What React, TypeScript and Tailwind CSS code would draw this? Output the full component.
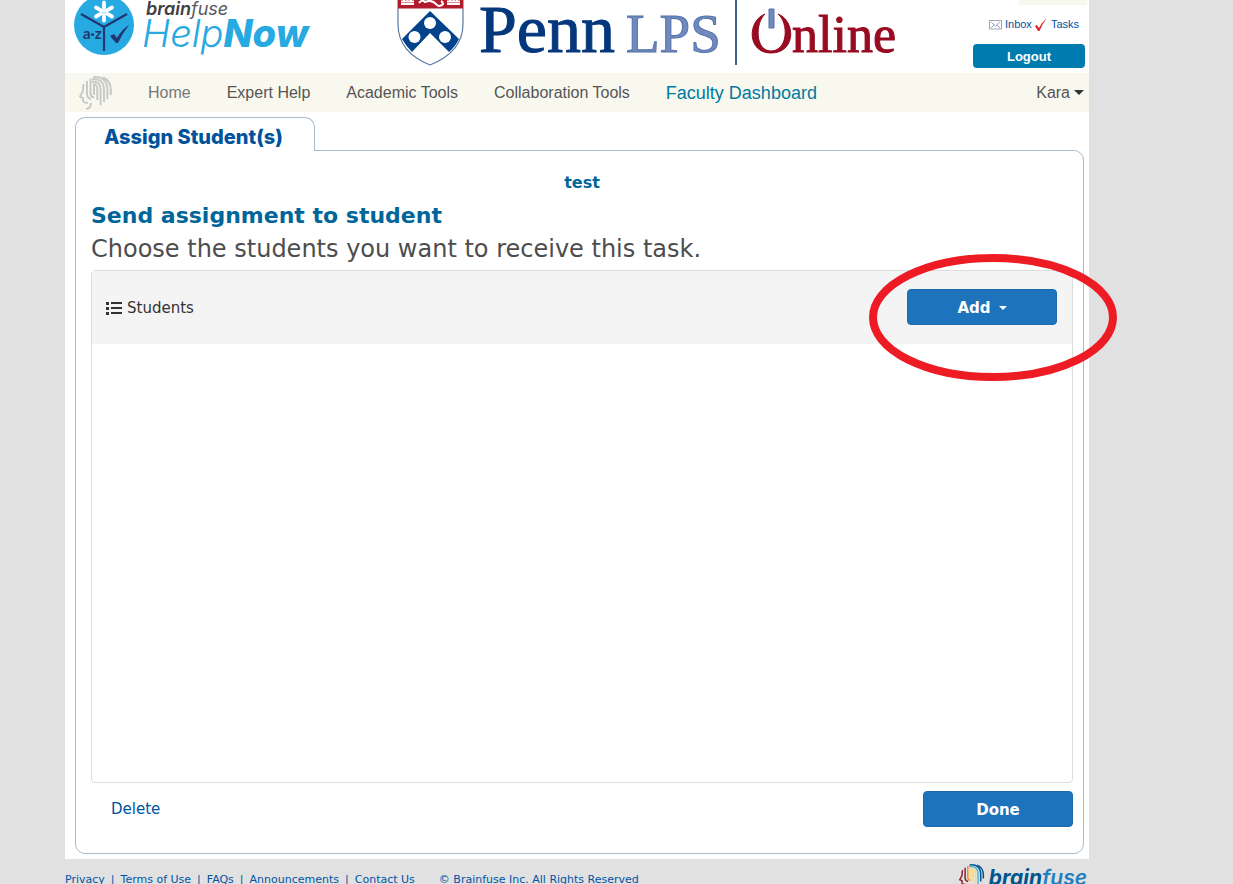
import { useState } from "react";

const VERDANA = "font-['DejaVu_Sans',sans-serif]";

const NAV_ITEMS = ["Expert Help", "Academic Tools", "Collaboration Tools"];

const FOOTER_LINKS = ["Privacy", "Terms of Use", "FAQs", "Announcements", "Contact Us"];

// Fingerprint head, gray in the nav and coloured in the footer
function BrainIcon({ colors, className }: { colors: string[]; className?: string }) {
    return (
        <svg viewBox="0 0 34 34" className={className} fill="none" strokeWidth="2" aria-hidden="true">
            <path d="M5 8C3 11 5 14 3.500 16L1 20.500L4 22V25Q5 27.500 9 26.500M7 33Q12 32 12 27" stroke={colors[0]} />
            <path d="M8 5V18Q8 22 12 23" stroke={colors[0]} />
            <path d="M11.500 2.500V18Q12 21 15 21.500" stroke={colors[1]} />
            <path d="M15 8.500V19M14 8.300Q18.300 8 18.300 13V24" stroke={colors[2]} />
            <path d="M13 5.800Q21.500 5 21.600 13V29" stroke={colors[2]} />
            <path d="M13 3.300Q25 2 25 13.500V26" stroke={colors[3]} />
            <path d="M14 1.200Q28.300 0 28.400 13.500V23" stroke={colors[4]} />
            <path d="M24 1.500Q31.700 5 31.800 13.500V19" stroke={colors[4]} />
        </svg>
    );
}

function HelpNowLogo() {
    return (
        <svg width="244" height="60" viewBox="0 0 244 60" role="img" aria-label="brainfuse HelpNow" className="shrink-0">
            <circle cx="30" cy="25" r="30" fill="#27a9e1" />
            <path d="M7 14L30 27L53 14M30 27V51" stroke="#21356f" strokeWidth="2.200" fill="none" />
            <g stroke="#fff" strokeWidth="3.800" strokeLinecap="round">
                <path d="M30 2.500V8M30 16V20.500M22 7.500L27 10.300M33 13.700L38 16.500M38 7.500L33 10.300M27 13.700L22 16.500" />
                <path d="M30 8V16M27 10.300L33 13.700M33 10.300L27 13.700" strokeWidth="1.500" />
            </g>
            <text x="9" y="39" fontSize="15" fontWeight="700" fill="#21356f" fontFamily="Lato, sans-serif">a·z</text>
            <path d="M36 36L40 34L43 38Q48 29 55 25Q48 34 44 43H42Z" fill="#21356f" />
            <text x="72" y="15" fontSize="18" fill="#58595b" fontStyle="italic" fontFamily="Inter, sans-serif">
                <tspan fontWeight="600" fill="#414042">brain</tspan>
                <tspan>fuse</tspan>
            </text>
            <text x="68" y="47" fontSize="38" fill="#27a9e1" fontStyle="italic" fontFamily="Inter, sans-serif">
                <tspan fontWeight="300">Help</tspan>
                <tspan fontWeight="800">Now</tspan>
            </text>
        </svg>
    );
}

function PennLogo() {
    return (
        <svg width="500" height="68" viewBox="0 0 500 68" role="img" aria-label="Penn LPS Online" className="shrink-0" fontFamily="'Liberation Serif', serif">
            <path d="M1 0V24C1 44 13 57 33 65C53 57 66 44 66 24V0Z" fill="#fff" stroke="#5b7ba5" strokeWidth="1.200" />
            <path d="M1 0H66V8.500H1Z" fill="#b01c2e" />
            <path d="M4 4H17M4 1.500H17M50 4H63M50 1.500H63M22 3Q25 -1 28 2Q34 -1 39 4Q42 8 46 4Q46 2 44 1" stroke="#fff" strokeWidth="2" fill="none" />
            <path d="M7 0V2M10.500 0V2M14 0V2M53 0V2M56.500 0V2M60 0V2" stroke="#fff" strokeWidth="2" />
            <path d="M33 11L62 39Q58 47 52 52L33 33L15 52Q9 46 5 39Z" fill="#02438b" />
            <circle cx="33" cy="23" r="6" fill="#fff" />
            <circle cx="17.500" cy="37" r="6" fill="#fff" />
            <circle cx="48" cy="37" r="6" fill="#fff" />
            <text x="82" y="52" fontSize="68" fill="#04377c" stroke="#04377c">Penn</text>
            <text x="229" y="52" fontSize="55" fill="#6f8abf" stroke="#5472a8">LPS</text>
            <path d="M339 0V65" stroke="#3f5f98" strokeWidth="2" />
            <path d="M368 14C350 21 350 53 374 53C399 53 399 21 381 14C392 23 391 51 374 51C358 51 358 23 368 14Z" fill="#980b20" stroke="#980b20" />
            <path d="M372 9H377V28H372Z" fill="#6f8abf" stroke="#5472a8" />
            <text x="395" y="52" fontSize="52" fill="#980b20" stroke="#980b20">nline</text>
        </svg>
    );
}

function Header() {
    return (
        <header className="flex h-[73px] items-start justify-between pr-0.5 pl-[9px]">
            <div className="flex gap-[79px]">
                <HelpNowLogo />
                <PennLogo />
            </div>
            <div className="flex flex-col items-end font-['Liberation_Sans',sans-serif]">
                <div className="h-[5px] w-[68px] bg-[#f9f8ef]" />
                <div className="flex h-[39px] items-center gap-[3px] pr-2 text-[11px] text-[#0054a4]">
                    <a href="#inbox" className="flex items-center gap-[3px]">
                        <svg width="13" height="10" viewBox="0 0 13 10" fill="none" stroke="#9aa3bd" aria-hidden="true">
                            <path d="M.5 .5H12.500V9H.500ZM2 2L6.500 6L11 2M2 8L5 5M11 8L8 5" />
                        </svg>
                        Inbox
                    </a>
                    <a href="#tasks" className="flex items-center gap-[3px]">
                        <svg width="13" height="13" viewBox="0 0 13 13" aria-hidden="true">
                            <path d="M0 8L2 7L4 10Q7 4 12 0Q7 6 4.500 13H3Z" fill="#e4202a" />
                        </svg>
                        Tasks
                    </a>
                </div>
                <button className="mr-0.5 h-6 w-28 rounded bg-[#007bb0] pt-0.5 text-[13px] font-bold text-white">Logout</button>
            </div>
        </header>
    );
}

function Nav() {
    return (
        <nav className="flex h-[39px] items-center bg-[#f9f8ef] pr-[5px] pl-[14px] font-['Liberation_Sans',sans-serif] text-base text-[#555]">
            <BrainIcon colors={["#c9c9c5", "#c9c9c5", "#c9c9c5", "#c9c9c5", "#c9c9c5"]} className="mr-[35px] size-[34px]" />
            <div className="flex items-center gap-9">
                <a href="#home" className="text-[#777]">Home</a>
                {NAV_ITEMS.map((item) => (
                    <a key={item} href="#menu">{item}</a>
                ))}
                <a href="#dashboard" className="text-lg text-[#007a9f]">Faculty Dashboard</a>
            </div>
            <button className="ml-auto flex items-center gap-1">
                Kara
                <span className="border-x-5 border-t-5 border-x-transparent border-t-[#333]" />
            </button>
        </nav>
    );
}

export default function App() {
    const [open, setOpen] = useState(false);

    return (
        <div className={`min-h-screen bg-[#e1e1e1] pr-36 pl-[65px] ${VERDANA}`}>
            <div className="max-w-[1024px] bg-white pb-[5px]">
                <Header />
                <Nav />

                <main className="pt-[5px] pr-[5px] pl-[10px]">
                    {/* Tab */}
                    <h1 className="relative z-10 flex h-[34px] w-60 rounded-t-[10px] border border-b-0 border-[#a5bccf] bg-white pt-[3px] pl-7 font-[Inter,sans-serif] text-xl leading-8 font-extrabold text-[#00539b]">
                        Assign Student(s)
                    </h1>

                    <section className="-mt-px rounded-[10px] rounded-tl-none border border-[#a5bccf] pt-5 pr-[10px] pb-[26px] pl-[15px]">
                        <h2 className="text-center text-base leading-6 font-bold text-[#069]">test</h2>
                        <h3 className="pt-[5px] text-[22px] leading-8 font-bold text-[#069]">Send assignment to student</h3>
                        <p className="pt-px text-2xl leading-8 text-[#4d4d4d]">Choose the students you want to receive this task.</p>

                        {/* Student list */}
                        <div className="mt-[5px] rounded border border-[#ddd]">
                            <div className="flex h-[73px] items-start justify-between bg-[#f4f4f4] pt-[18px] pr-[15px] pl-[14px]">
                                <h4 className="flex h-9 items-center gap-[5px] pt-0.5 text-[15px] text-[#333]">
                                    <svg width="16" height="13" viewBox="0 0 16 13" fill="#333" aria-hidden="true">
                                        <path d="M0 0H3V3H0ZM5 0H16V2H5ZM0 5H3V8H0ZM5 5H16V7H5ZM0 10H3V13H0ZM5 10H16V12H5Z" />
                                    </svg>
                                    Students
                                </h4>
                                <div className="relative">
                                    <button
                                        onClick={() => setOpen(!open)}
                                        aria-expanded={open}
                                        className="flex h-9 w-[150px] items-center justify-center gap-2 rounded border border-[#1b6aab] bg-[#1e74bc] pt-0.5 text-[15px] font-bold text-white"
                                    >
                                        Add
                                        <span className="border-x-4 border-t-4 border-x-transparent border-t-white" />
                                    </button>
                                    <svg
                                        width="248"
                                        height="127"
                                        viewBox="0 0 248 127"
                                        className="pointer-events-none absolute -top-[35px] -left-[38px] z-20 max-w-none"
                                        aria-hidden="true"
                                    >
                                        <ellipse cx="124" cy="63.500" rx="120" ry="59.500" fill="none" stroke="#ed1c24" strokeWidth="8" />
                                    </svg>
                                </div>
                            </div>
                            <div className="min-h-[438px]" />
                        </div>

                        <div className="mt-2 flex items-center justify-between pl-5">
                            <a href="#delete" className="text-[15px] text-[#0054a4]">Delete</a>
                            <button className="h-9 w-[150px] rounded border border-[#1b6aab] bg-[#1e74bc] pt-0.5 text-[15px] font-bold text-white">
                                Done
                            </button>
                        </div>
                    </section>
                </main>
            </div>

            <footer className="flex h-[25px] max-w-[1024px] items-start justify-between pr-0.5 text-[11px] leading-4 text-[#0054a4]">
                <div className="flex gap-6 pt-[13px]">
                    <div className="flex gap-1.5">
                        {FOOTER_LINKS.map((link, i) => (
                            <span key={link} className="flex gap-1.5">
                                {i > 0 && <span>|</span>}
                                <a href="#footer">{link}</a>
                            </span>
                        ))}
                    </div>
                    <span>© Brainfuse Inc. All Rights Reserved</span>
                </div>
                <div className="flex gap-1 pt-[5px]">
                    <BrainIcon colors={["#8e2a2f", "#f0913a", "#f5dc8a", "#58b5dd", "#00558f"]} className="size-[26px] shrink-0" />
                    <span className="pt-0.5 font-[Inter,sans-serif] text-[21px] leading-6 font-bold text-[#00558f] italic">
                        brain<span className="font-semibold text-[#1f7fc4]">fuse</span>
                    </span>
                </div>
            </footer>
        </div>
    );
}
